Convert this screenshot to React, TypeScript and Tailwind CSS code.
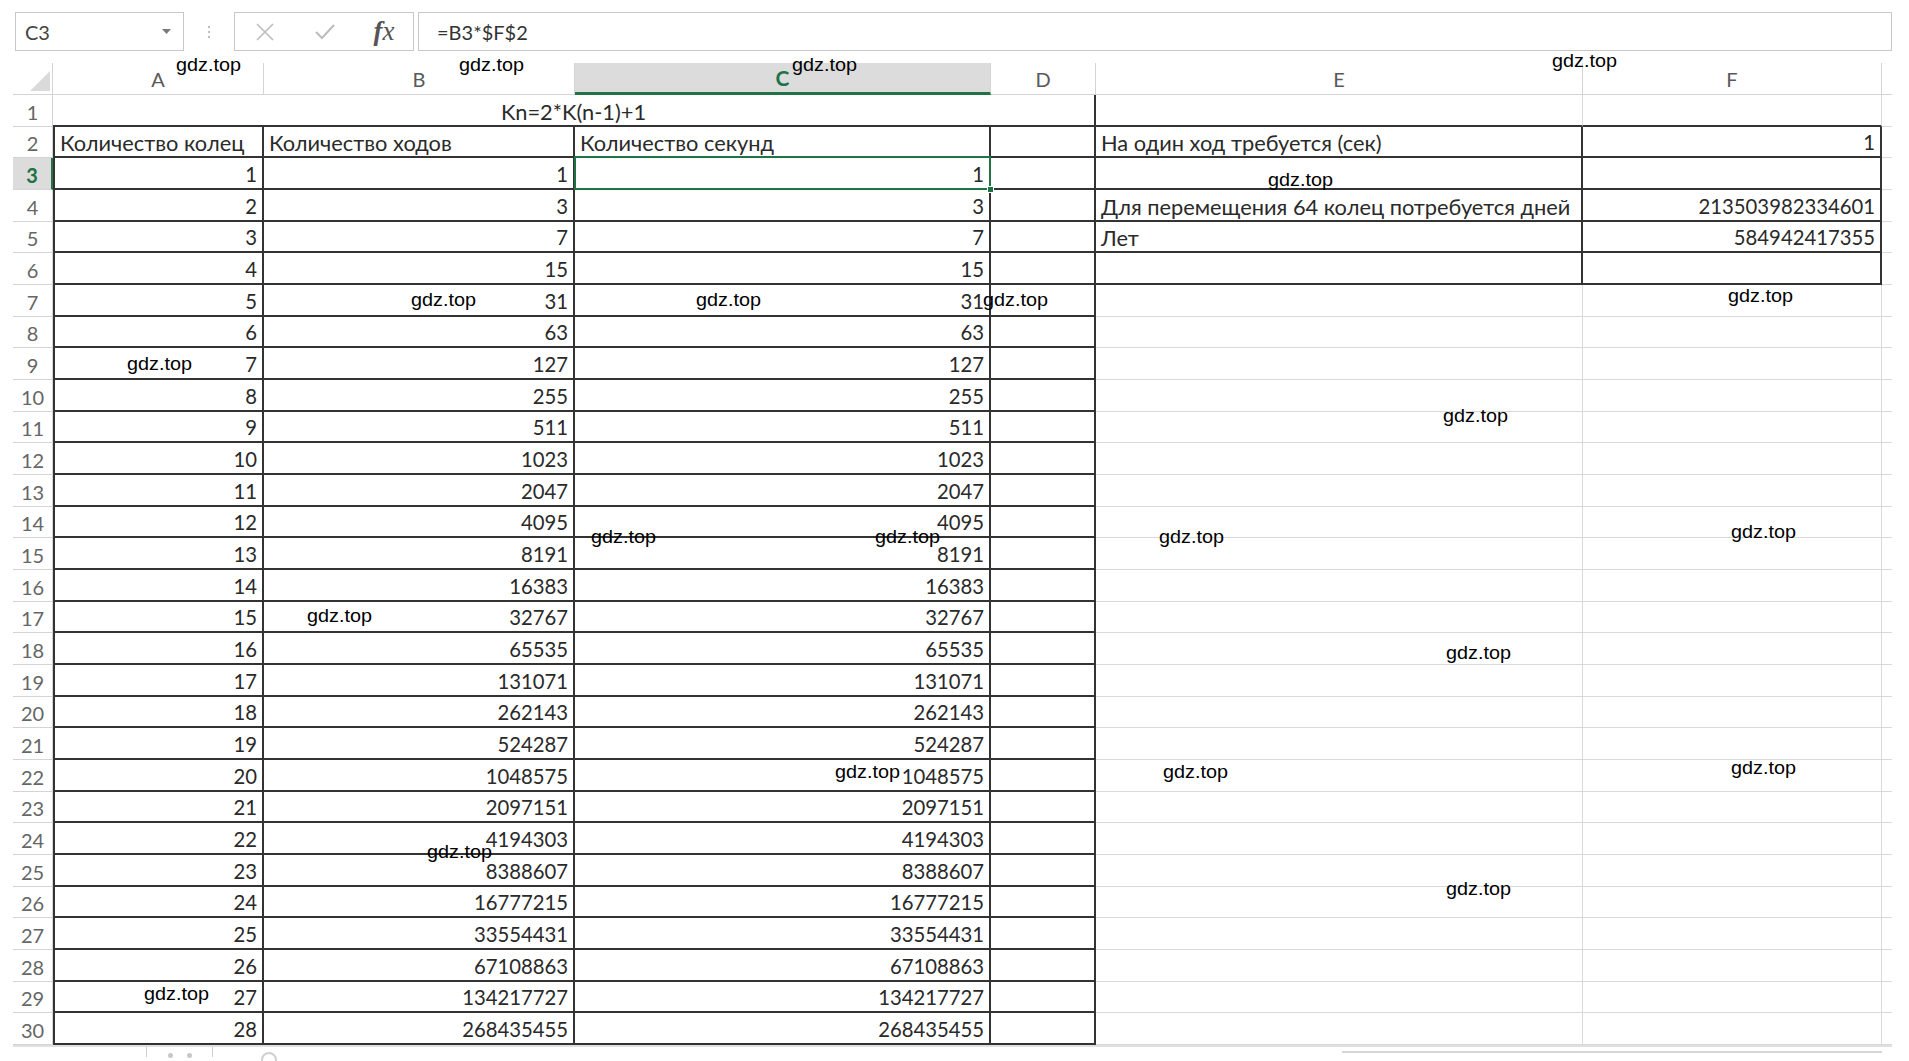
import React from "react";

type WM = { l: number; t: number };
const marks: WM[] = [
  { l: 176, t: 56 },
  { l: 459, t: 56 },
  { l: 792, t: 56 },
  { l: 1552, t: 52 },
  { l: 1268, t: 171 },
  { l: 411, t: 291 },
  { l: 696, t: 291 },
  { l: 983, t: 291 },
  { l: 1728, t: 287 },
  { l: 127, t: 355 },
  { l: 1443, t: 407 },
  { l: 591, t: 528 },
  { l: 875, t: 528 },
  { l: 1159, t: 528 },
  { l: 1731, t: 523 },
  { l: 307, t: 607 },
  { l: 1446, t: 644 },
  { l: 835, t: 763 },
  { l: 1163, t: 763 },
  { l: 1731, t: 759 },
  { l: 427, t: 843 },
  { l: 1446, t: 880 },
  { l: 144, t: 985 },
];

function Txt({
  children,
  right,
  center,
  num,
}: {
  children?: React.ReactNode;
  right?: boolean;
  center?: boolean;
  num?: boolean;
}) {
  return (
    <div
      className={
        "flex items-end h-full px-[5px] pb-[1px] leading-[25px] whitespace-nowrap " +
        (num ? "text-[20.3px] " : "text-[21.8px] ") +
        (right ? "justify-end" : center ? "justify-center" : "justify-start")
      }
    >
      {children}
    </div>
  );
}

export default function App() {
  const rows = Array.from({ length: 30 }, (_, i) => i + 1);
  const headers = ["A", "B", "C", "D", "E", "F"];

  const eLabels: Record<number, string> = {
    2: "На один ход требуется (сек)",
    4: "Для перемещения 64 колец потребуется дней",
    5: "Лет",
  };
  const fVals: Record<number, string> = {
    2: "1",
    4: "213503982334601",
    5: "584942417355",
  };

  return (
    <div
      className="relative w-[1909px] h-[1061px] bg-white overflow-hidden text-[#2a2a2a]"
      style={{ fontFamily: "Lato, 'Noto Sans', sans-serif" }}
    >
      {/* Formula bar */}
      <div className="flex items-stretch pt-[12px] pl-[15px] h-[51px]">
        <div className="w-[169px] h-[39px] border border-[#c8c8c8] flex items-center justify-between pl-[9px] pr-[12px] text-[20px] text-[#444]">
          <span>C3</span>
          <svg width="9" height="6" viewBox="0 0 9 6">
            <path d="M0 0 L9 0 L4.5 5 Z" fill="#7a7a7a" />
          </svg>
        </div>
        <div className="w-[50px] flex items-center justify-center">
          <div className="flex flex-col gap-[3px]">
            <div className="w-[2px] h-[2px] bg-[#bdbdbd]" />
            <div className="w-[2px] h-[2px] bg-[#bdbdbd]" />
            <div className="w-[2px] h-[2px] bg-[#bdbdbd]" />
          </div>
        </div>
        <div className="w-[180px] h-[39px] border border-[#c8c8c8] flex items-center">
          <div className="w-[60px] flex justify-center">
            <svg width="20" height="20" viewBox="0 0 20 20">
              <path d="M2 2 L18 18 M18 2 L2 18" stroke="#bcbcbc" strokeWidth="1.6" fill="none" />
            </svg>
          </div>
          <div className="w-[60px] flex justify-center">
            <svg width="22" height="18" viewBox="0 0 22 18">
              <path d="M2 9 L8 15 L20 2" stroke="#bcbcbc" strokeWidth="2" fill="none" />
            </svg>
          </div>
          <div className="w-[58px] flex justify-center">
            <span
              className="italic text-[27px] text-[#555] leading-none"
              style={{ fontFamily: "'Liberation Serif', serif" }}
            >
              <span className="font-bold">f</span>x
            </span>
          </div>
        </div>
        <div className="ml-[4px] w-[1474px] h-[39px] border border-[#c8c8c8] flex items-center pl-[18px] text-[20px] text-[#333]">
          =B3*$F$2
        </div>
      </div>

      {/* Sheet grid */}
      <div className="mt-[12px] ml-[13px] w-[1879px] h-[982px] grid grid-cols-[40px_211px_311px_416px_105px_487px_299px_10px] grid-rows-[32px_repeat(30,minmax(0,1fr))] text-[21px]">
        {/* Header row */}
        <div className="relative border-r border-b border-[#d4d4d4]">
          <svg className="absolute right-[2px] bottom-[3px]" width="20" height="20" viewBox="0 0 20 20">
            <path d="M20 0 L20 20 L0 20 Z" fill="#dadada" />
          </svg>
        </div>
        {headers.map((h) =>
          h === "C" ? (
            <div
              key={h}
              className="bg-[#dcdcdc] border-r border-r-[#d4d4d4] border-b-[3px] border-b-[#217346] flex items-end justify-center pb-[1px] text-[#217346] font-bold text-[21px] leading-[26px]"
            >
              C
            </div>
          ) : (
            <div
              key={h}
              className="border-r border-b border-[#d4d4d4] flex items-end justify-center pb-[2px] text-[#595959] text-[20px] leading-[26px]"
            >
              {h}
            </div>
          )
        )}
        <div className="border-b border-[#d4d4d4]" />

        {rows.map((r) => {
          const rowHeader =
            r === 3 ? (
              <div
                key={`h${r}`}
                className="bg-[#dcdcdc] border-b border-b-[#d4d4d4] border-r-2 border-r-[#217346] flex items-end justify-center pb-[1px] leading-[25px] text-[#217346] font-bold text-[20px]"
              >
                {r}
              </div>
            ) : (
              <div
                key={`h${r}`}
                className="border-b border-b-[#d4d4d4] border-r border-r-[#d4d4d4] flex items-end justify-center pb-[1px] leading-[25px] text-[#666] text-[20px]"
              >
                {r}
              </div>
            );

          const eBox = r >= 2 && r <= 6;
          const eCls = eBox
            ? "border-r-2 border-r-[#333] border-b-2 border-b-[#333]"
            : r === 1
            ? "border-r border-r-[#d9d9d9] border-b-2 border-b-[#333]"
            : "border-r border-r-[#d9d9d9] border-b border-b-[#d9d9d9]";

          if (r === 1) {
            return (
              <React.Fragment key={r}>
                {rowHeader}
                <div className="col-span-4 border-r-2 border-r-[#333] border-b-2 border-b-[#333]">
                  <Txt center>Kn=2*K(n-1)+1</Txt>
                </div>
                <div className={eCls} />
                <div className={eCls} />
                <div className="border-b border-b-[#d9d9d9]" />
              </React.Fragment>
            );
          }

          const dark = "border-r-2 border-r-[#333] border-b-2 border-b-[#333]";
          let a: React.ReactNode = null;
          let b: React.ReactNode = null;
          let c: React.ReactNode = null;
          if (r === 2) {
            a = <Txt>Количество колец</Txt>;
            b = <Txt>Количество ходов</Txt>;
            c = <Txt>Количество секунд</Txt>;
          } else {
            const n = r - 2;
            const v = String(2 ** n - 1);
            a = <Txt right num>{n}</Txt>;
            b = <Txt right num>{v}</Txt>;
            c = <Txt right num>{v}</Txt>;
          }

          return (
            <React.Fragment key={r}>
              {rowHeader}
              <div className={"border-l-2 border-l-[#333] " + dark}>{a}</div>
              <div className={dark}>{b}</div>
              <div className={"relative " + dark}>
                {c}
                {r === 3 && (
                  <>
                    <div className="absolute -left-[1px] -top-[2px] -right-[2px] -bottom-[2px] border-2 border-[#217346] z-10" />
                    <div className="absolute -right-[5px] -bottom-[5px] w-[7px] h-[7px] bg-[#217346] border border-white z-20" />
                  </>
                )}
              </div>
              <div className={dark} />
              <div className={eCls}>{eLabels[r] ? <Txt>{eLabels[r]}</Txt> : null}</div>
              <div className={eCls}>{fVals[r] ? <Txt right num>{fVals[r]}</Txt> : null}</div>
              <div className="border-b border-b-[#d9d9d9]" />
            </React.Fragment>
          );
        })}
      </div>

      {/* bottom strip */}
      <div className="ml-[13px] w-[1879px] h-[16px] border-t-2 border-t-[#e0e0e0] flex items-start">
        <div className="w-[133px]" />
        <div className="w-[1px] h-[10px] bg-[#cfcfcf]" />
        <div className="w-[65px] flex justify-center gap-[14px] pt-[6px]">
          <div className="w-[5px] h-[5px] rounded-full bg-[#c8c8c8]" />
          <div className="w-[5px] h-[5px] rounded-full bg-[#c8c8c8]" />
        </div>
        <div className="w-[1px] h-[10px] bg-[#cfcfcf]" />
        <div className="ml-[48px] mt-[5px] w-[16px] h-[16px] rounded-full border-2 border-[#d0d0d0]" />
        <div className="ml-auto mr-[10px] mt-[4px] w-[540px] h-[2px] bg-[#d6d6d6]" />
      </div>

      {/* watermarks */}
      {marks.map((m, i) => (
        <span
          key={i}
          className="absolute text-[18px] leading-[18px] text-black origin-left scale-x-[1.1] whitespace-nowrap"
          style={{ left: m.l, top: m.t, fontFamily: "'Liberation Sans', Arial, sans-serif" }}
        >
          gdz.top
        </span>
      ))}
    </div>
  );
}
